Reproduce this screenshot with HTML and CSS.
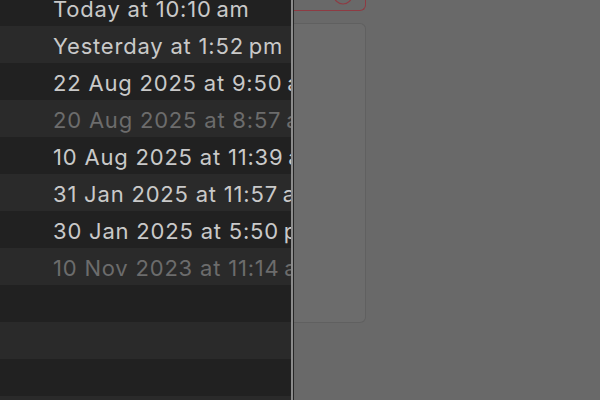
FILE: index.html
```html
<!DOCTYPE html>
<html lang="en">

<head>
    <meta charset="UTF-8">
    <meta name="viewport" content="width=device-width, initial-scale=1.0">
    <title>Versions</title>
    <link rel="stylesheet" href="styles.css">
</head>

<body>
    <div class="window">
        <ul class="version-list">
            <li class="row">Today at 10:10&#8201;am</li>
            <li class="row">Yesterday at 1:52&#8201;pm</li>
            <li class="row">22 Aug 2025 at 9:50&#8201;am</li>
            <li class="row dim">20 Aug 2025 at 8:57&#8201;am</li>
            <li class="row">10 Aug 2025 at 11:39&#8201;am</li>
            <li class="row">31 Jan 2025 at 11:57&#8201;am</li>
            <li class="row">30 Jan 2025 at 5:50&#8201;pm</li>
            <li class="row dim">10 Nov 2023 at 11:14&#8201;am</li>
            <li class="row"></li>
            <li class="row"></li>
            <li class="row"></li>
            <li class="row"></li>
        </ul>

        <div class="divider"></div>

        <div class="sheet">
            <div class="sheet-column">
                <div class="restore-box">
                    <svg class="restore-icon" width="24" height="12" viewBox="0 0 24 12">
                        <circle cx="12" cy="-5" r="9" fill="none" stroke="#8e3b43" stroke-width="1.2" />
                    </svg>
                </div>
                <div class="preview-card"></div>
            </div>
        </div>
    </div>
</body>

</html>
```

FILE: styles.css
```css
body {
    margin: 0;
    padding: 0;
    width: 600px;
    height: 400px;
    overflow: hidden;
    background-color: #6a6a6a;
    font-family: 'Inter', 'Liberation Sans', sans-serif;
}

.window {
    display: flex;
    height: 400px;
    overflow: hidden;
}

.version-list {
    list-style-type: none;
    margin: -11px 0 0 0;
    padding: 0;
    width: 291px;
    flex-shrink: 0;
    overflow: hidden;
}

.row {
    height: 37px;
    padding-left: 53px;
    display: flex;
    align-items: center;
    white-space: nowrap;
    overflow: hidden;
    font-size: 22px;
    letter-spacing: 0.8px;
    padding-top: 2px;
    box-sizing: border-box;
    color: #c9c9c9;
    background-color: #212121;
}

.row:nth-child(even) {
    background-color: #2a2a2a;
}

.row.dim {
    color: #6c6c6c;
}

.divider {
    width: 2px;
    flex-shrink: 0;
    background-color: #8c8c8c;
    border-right: 1px solid #262626;
}

.sheet {
    flex: 1;
    background-color: #696969;
}

.sheet-column {
    width: 72px;
    display: flex;
    flex-direction: column;
    gap: 12px;
}

.restore-box {
    height: 10px;
    border: 1px solid #8e3b43;
    border-top: none;
    border-left: none;
    border-radius: 0 0 6px 0;
    display: flex;
    justify-content: flex-end;
    padding-right: 10px;
}

.restore-icon {
    display: block;
}

.preview-card {
    height: 298px;
    background-color: #6c6c6c;
    border: 1px solid #606060;
    border-left: none;
    border-radius: 0 6px 6px 0;
}
```
